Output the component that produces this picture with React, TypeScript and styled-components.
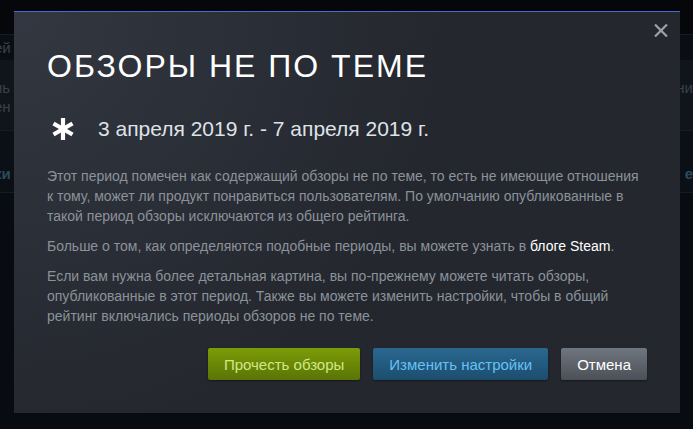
import React from "react";
import styled, { createGlobalStyle } from "styled-components";

const GlobalStyle = createGlobalStyle`
  html, body {
    margin: 0;
    padding: 0;
    background: #070a0f;
    font-family: "Liberation Sans", Arial, sans-serif;
  }
`;

const Page = styled.div`
  position: relative;
  width: 693px;
  height: 429px;
  overflow: hidden;
  background: #070a0f;
`;

// the store page behind the dim overlay
const Backdrop = styled.div`
  display: flex;
  flex-direction: column;
  height: 100%;
  font-size: 15px;
`;

const BgRow = styled.div<{ $h: number; $bg?: string; $line?: boolean; $pb?: number; $pt?: number }>`
  height: ${(p) => p.$h}px;
  background: ${(p) => p.$bg || "transparent"};
  border-bottom: ${(p) => (p.$line ? "1px solid #161c24" : "none")};
  display: flex;
  flex-direction: column;
  justify-content: ${(p) => (p.$pb ? "flex-end" : p.$pt ? "flex-start" : "center")};
  padding-bottom: ${(p) => p.$pb || 0}px;
  padding-top: ${(p) => p.$pt || 0}px;
  box-sizing: border-box;
  line-height: 19px;
`;

const BgText = styled.div<{ $blue?: boolean }>`
  display: flex;
  justify-content: space-between;
  color: ${(p) => (p.$blue ? "#2b4a5e" : "#3a4149")};
  font-weight: ${(p) => (p.$blue ? "bold" : "normal")};
  margin-left: -6px;
`;

const Modal = styled.div`
  position: absolute;
  left: 14px;
  top: 11px;
  width: 666px;
  height: 402px;
  box-sizing: border-box;
  border-top: 1px solid #4a6bc9;
  background: radial-gradient(circle at 0 0, rgba(62, 68, 80, 0.55) 0%, rgba(62, 68, 80, 0) 55%), #24272e;
  padding: 34px 33px 0 33px;
  display: flex;
  flex-direction: column;
`;

const Close = styled.div`
  position: absolute;
  right: 8px;
  top: 9px;
  width: 16px;
  height: 16px;
  padding: 2px;
`;

const Title = styled.h1`
  margin: 0;
  font-size: 32px;
  font-weight: normal;
  letter-spacing: 2px;
  color: #ffffff;
  line-height: 40px;
`;

const DateRow = styled.div`
  display: flex;
  align-items: center;
  margin-top: 30px;
  padding-left: 5px;
  gap: 24px;
  font-size: 21px;
  color: #dfe3e7;
  height: 26px;
`;

const Body = styled.div`
  margin-top: 24px;
  font-size: 14px;
  line-height: 20px;
  color: #8b929a;
`;

const Para = styled.p`
  margin: 0 0 10px 0;
`;

const Link = styled.span`
  color: #ffffff;
`;

const ButtonBar = styled.div`
  display: flex;
  justify-content: flex-end;
  gap: 13px;
  margin-top: 12px;
`;

const Button = styled.div<{ $kind: "green" | "blue" | "grey" }>`
  height: 32px;
  box-sizing: border-box;
  padding: 0 16px;
  border-radius: 2px;
  display: flex;
  align-items: center;
  font-size: 15px;
  box-shadow: 0 1px 2px rgba(0, 0, 0, 0.4);
  color: ${(p) => (p.$kind === "green" ? "#d2e885" : p.$kind === "blue" ? "#67c1f5" : "#ffffff")};
  background: ${(p) =>
    p.$kind === "green"
      ? "linear-gradient(to bottom, #7c9c06 0%, #5a7407 100%)"
      : p.$kind === "blue"
      ? "linear-gradient(to bottom, #2a6891 0%, #1c4d6d 100%)"
      : "linear-gradient(to bottom, #70767f 0%, #4b5058 100%)"};
`;

const Asterisk = () => (
  <svg width="22" height="22" viewBox="0 0 22 22">
    <g stroke="#ffffff" strokeWidth="4.2" strokeLinecap="butt">
      <line x1="11" y1="0" x2="11" y2="22" />
      <line x1="1.5" y1="5.5" x2="20.5" y2="16.5" />
      <line x1="1.5" y1="16.5" x2="20.5" y2="5.5" />
    </g>
  </svg>
);

const CloseIcon = () => (
  <svg width="14" height="13" viewBox="0 0 14 13">
    <g stroke="#9da1a7" strokeWidth="2.2">
      <line x1="1" y1="0.5" x2="13" y2="12.5" />
      <line x1="13" y1="0.5" x2="1" y2="12.5" />
    </g>
  </svg>
);

export default function App() {
  return (
    <Page>
      <GlobalStyle />
      <Backdrop>
        <BgRow $h={35} $bg="#05070b" $line />
        <BgRow $h={25} $bg="#0a0e14">
          <BgText>
            <span>ей</span>
            <span />
          </BgText>
        </BgRow>
        <BgRow $h={71} $bg="#10151c" $line $pt={18}>
          <BgText>
            <span>нь</span>
            <span>ни</span>
          </BgText>
          <BgText>
            <span>ен</span>
            <span />
          </BgText>
        </BgRow>
        <BgRow $h={62} $bg="#0b1016" $line $pb={9}>
          <BgText $blue>
            <span>ки</span>
            <span>е</span>
          </BgText>
        </BgRow>
        <BgRow $h={236} $bg="#080b10" />
      </Backdrop>

      <Modal>
        <Close>
          <CloseIcon />
        </Close>
        <Title>ОБЗОРЫ НЕ ПО ТЕМЕ</Title>
        <DateRow>
          <Asterisk />
          <span>3 апреля 2019 г. - 7 апреля 2019 г.</span>
        </DateRow>
        <Body>
          <Para>
            Этот период помечен как содержащий обзоры не по теме, то есть не имеющие отношения к тому, может ли
            продукт понравиться пользователям. По умолчанию опубликованные в такой период обзоры исключаются из
            общего рейтинга.
          </Para>
          <Para>
            Больше о том, как определяются подобные периоды, вы можете узнать в <Link>блоге Steam</Link>.
          </Para>
          <Para>
            Если вам нужна более детальная картина, вы по-прежнему можете читать обзоры, опубликованные в этот
            период. Также вы можете изменить настройки, чтобы в общий рейтинг включались периоды обзоров не по
            теме.
          </Para>
        </Body>
        <ButtonBar>
          <Button $kind="green">Прочесть обзоры</Button>
          <Button $kind="blue">Изменить настройки</Button>
          <Button $kind="grey">Отмена</Button>
        </ButtonBar>
      </Modal>
    </Page>
  );
}
